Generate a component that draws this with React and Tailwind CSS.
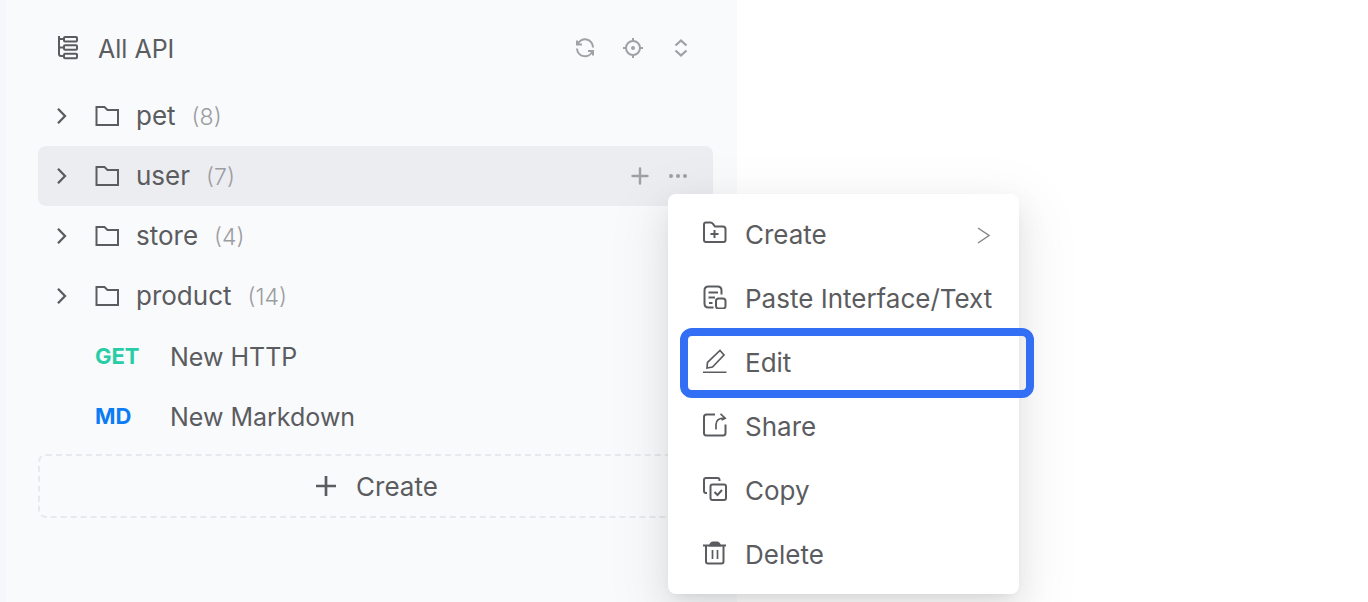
import React from 'react';

const folders = [
    { name: 'pet', count: 8 },
    { name: 'user', count: 7, active: true },
    { name: 'store', count: 4 },
    { name: 'product', count: 14 },
];

const docs = [
    { tag: 'GET', name: 'New HTTP', color: 'text-[#28cda6]' },
    { tag: 'MD', name: 'New Markdown', color: 'text-[#0c7cf5]' },
];

function Icon({ size = 24, stroke = 2, className = '', children }) {
    return (
        <svg
            width={size}
            height={size}
            viewBox={`0 0 ${size} ${size}`}
            fill="none"
            stroke="currentColor"
            strokeWidth={stroke}
            className={`shrink-0 ${className}`}
            aria-hidden="true"
        >
            {children}
        </svg>
    );
}

const menuItems = [
    {
        label: 'Create',
        submenu: true,
        icon: (
            <>
                <path d="M1 19V3.5Q1 1.500 3 1.500H7.500Q9 1.500 9.800 2.700L12 5.500H20Q22.500 5.500 22.500 8V19Q22.500 21 20.500 21H3Q1 21 1 19Z" />
                <path d="M11.500 9V17M7.500 13H15.500" />
            </>
        ),
    },
    {
        label: 'Paste Interface/Text',
        icon: (
            <>
                <path d="M10.500 22.500H5.500Q1.500 22.500 1.500 18.500V5.500Q1.500 1.500 5.500 1.500H14.500Q18.500 1.500 18.500 5.500V9.500" />
                <path d="M5.500 7.500H15M5.500 12.500H12M6 18H9.500" />
                <rect x="13" y="13.500" width="9.500" height="10" rx="2.500" />
            </>
        ),
    },
    {
        label: 'Edit',
        outlined: true,
        icon: (
            <>
                <path d="M0 23.500H23.500" />
                <path d="M17 1.500L21 6L9.500 18L4 19L4.500 13.500Z" strokeWidth="1.700" />
            </>
        ),
    },
    {
        label: 'Share',
        icon: (
            <>
                <path d="M12 1.500H3.500Q1 1.500 1 4V20Q1 22.500 3.500 22.500H20Q22.500 22.500 22.500 20V11.500" />
                <path d="M13 16.500V11.500Q13 5 22 5M17.500 0.800L22.200 5.200L18.500 7" strokeWidth="1.700" />
            </>
        ),
    },
    {
        label: 'Copy',
        icon: (
            <>
                <path d="M4 16H3Q1 16 1 14V3Q1 1 3 1H14.500Q16.500 1 16.500 3V4" />
                <rect x="7.500" y="7.500" width="15.500" height="15.500" rx="2" />
                <path d="M11.500 15L14.500 18L19 13" />
            </>
        ),
    },
    {
        label: 'Delete',
        icon: (
            <>
                <path d="M0 4.500H23M3 4.500V20.500Q3 22.500 5 22.500H18.500Q20.500 22.500 20.500 20.500V4.500" />
                <path d="M9.500 9V18M14.500 9V18" strokeWidth="1.700" />
                <path d="M7 4.500Q8 1.500 10 1.500H14Q16 1.500 17 4.500Z" fill="currentColor" />
            </>
        ),
    },
];

function ContextMenu() {
    return (
        <div
            role="menu"
            className="absolute left-0 top-7 z-10 w-[351px] rounded-lg bg-white py-2 text-[#5b5c60] shadow-[0_12px_32px_0_rgba(0,0,0,0.08),0_6px_12px_-8px_rgba(0,0,0,0.12),0_18px_56px_16px_rgba(0,0,0,0.05)]"
        >
            {menuItems.map((item) => (
                <div key={item.label} className="relative">
                    <button type="button" role="menuitem" className="flex h-16 w-full items-center px-[35px] pt-0.5 text-left">
                        <Icon className="mb-1">{item.icon}</Icon>
                        <span className="ml-[18px] flex-1 whitespace-nowrap text-[26px] leading-8">{item.label}</span>
                        {item.submenu && (
                            <Icon size={18} stroke={1.5} className="-mr-2 text-[#85868a]">
                                <path d="M4 2L15 9.500L4 17" />
                            </Icon>
                        )}
                    </button>
                    {item.outlined && (
                        <div className="pointer-events-none absolute -bottom-1 -right-[15px] -top-0.5 left-3 rounded-xl border-8 border-[#326ff5]" />
                    )}
                </div>
            ))}
        </div>
    );
}

function FolderRow({ name, count, active }) {
    return (
        <li className={`flex h-15 items-center rounded-lg pr-[25px] ${active ? 'bg-[#ecedf1]' : ''}`}>
            <button type="button" className="flex h-full flex-1 items-center pl-4 text-left">
                <Icon size={16}>
                    <path d="M4 0.800L11 8L4 15.200" strokeWidth="2.300" />
                </Icon>
                <Icon className="ml-[25px]">
                    <path d="M1.500 3H9.500L12.500 6H23V21H1.500Z" />
                </Icon>
                <span className="ml-[17px] text-[26px] leading-8">{name}</span>
                <span className="ml-4 pt-0.5 text-[23px] font-light leading-8 text-[#9c9da1]">({count})</span>
            </button>
            {active && (
                <div className="flex items-center gap-[18px] text-[#9fa0a4]">
                    <button type="button" aria-label="Add to folder">
                        <Icon size={20} stroke={2.4} className="block">
                            <path d="M10 2.500V17.500M2.500 10H17.500" strokeLinecap="round" />
                        </Icon>
                    </button>
                    <div className="relative">
                        <button type="button" aria-label="More actions" className="block">
                            <Icon size={20}>
                                <g fill="currentColor" stroke="none">
                                    <circle cx="3" cy="10" r="2" />
                                    <circle cx="10" cy="10" r="2" />
                                    <circle cx="17" cy="10" r="2" />
                                </g>
                            </Icon>
                        </button>
                        <ContextMenu />
                    </div>
                </div>
            )}
        </li>
    );
}

export default function App() {
    return (
        <div className="flex min-h-screen bg-white font-['Inter',sans-serif] text-[#5b5c60]">
            <aside className="w-[737px] border-l-6 border-[#f6f7fa] bg-[#f9fafc] pl-8 pr-6 pt-[18px]">
                {/* Header */}
                <header className="mb-2 flex h-15 items-center pl-[18px] pr-[22px]">
                    <Icon>
                        <path d="M3 0V18Q3 20 5 20H8M3 3H8M3 11.500H8" />
                        <rect x="8" y="1" width="13" height="4.500" rx="1" />
                        <rect x="8" y="9.300" width="13" height="4.500" rx="1" />
                        <rect x="8" y="17.800" width="13" height="4.500" rx="1" />
                    </Icon>
                    <h1 className="ml-[18px] flex-1 pt-0.5 text-[25px] leading-8">All API</h1>
                    <div className="flex items-center gap-7 text-[#a0a1a4]">
                        <button type="button" aria-label="Refresh">
                            <Icon size={20} className="block">
                                <path d="M2 2.500V6.500H7M2.500 6.500A8 8 0 0 1 18 9.500" />
                                <path d="M18 17.500V13H13M17.500 13A8 8 0 0 1 2 10.500" />
                            </Icon>
                        </button>
                        <button type="button" aria-label="Locate">
                            <Icon size={20} className="block">
                                <circle cx="10" cy="10" r="7" />
                                <circle cx="10" cy="10" r="2" fill="currentColor" stroke="none" />
                                <path d="M10 0V4M10 16V20M0 10H4M16 10H20" />
                            </Icon>
                        </button>
                        <button type="button" aria-label="Collapse all">
                            <Icon size={20} stroke={2.3} className="block">
                                <path d="M4.500 7.500L10 2.500L15.500 7.500M4.500 12.500L10 17.500L15.500 12.500" />
                            </Icon>
                        </button>
                    </div>
                </header>

                {/* Tree */}
                <ul>
                    {folders.map((folder) => (
                        <FolderRow key={folder.name} {...folder} />
                    ))}
                    {docs.map((doc) => (
                        <li key={doc.tag}>
                            <a href="#" className="flex h-15 items-center pl-[57px]">
                                <span className={`w-[75px] text-[22px] font-bold leading-8 ${doc.color}`}>{doc.tag}</span>
                                <span className="pt-0.5 text-[25px] leading-8">{doc.name}</span>
                            </a>
                        </li>
                    ))}
                </ul>

                <button
                    type="button"
                    className="mt-2 flex h-16 w-full items-center justify-center gap-5 rounded-lg border-2 border-dashed border-[#e8e9ee] pl-[3px]"
                >
                    <Icon size={20} stroke={2.7}>
                        <path d="M10 0V20M0 10H20" />
                    </Icon>
                    <span className="pt-0.5 text-[26px] leading-8">Create</span>
                </button>
            </aside>
        </div>
    );
}
